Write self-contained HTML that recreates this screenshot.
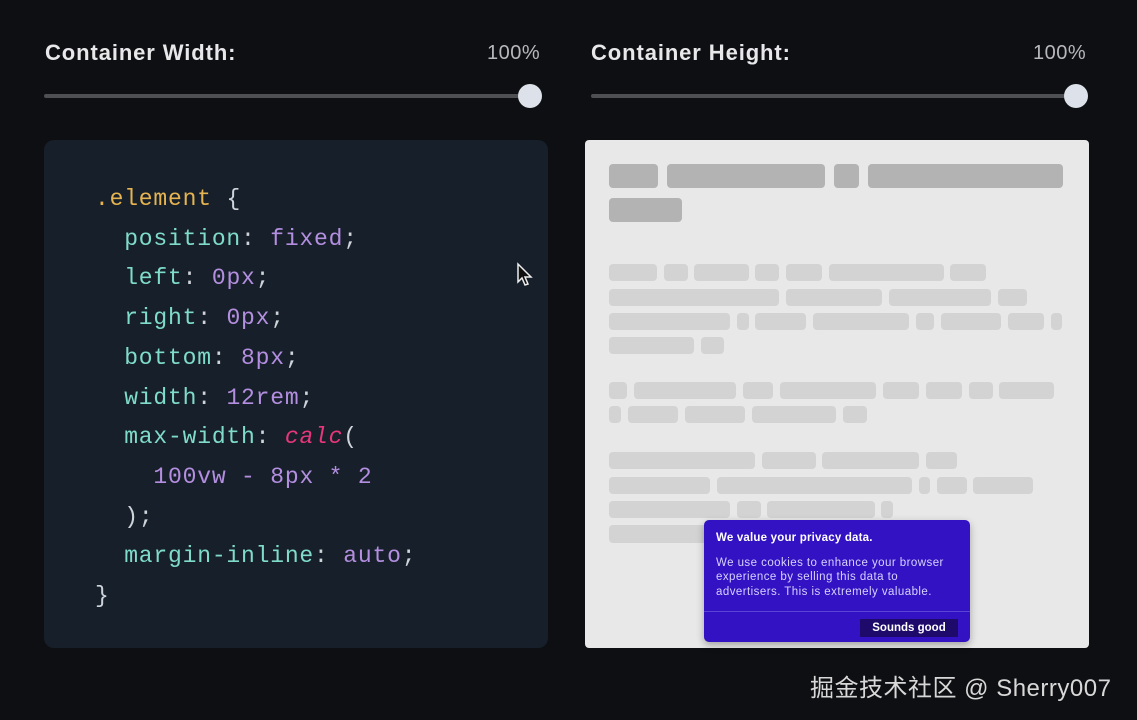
<!DOCTYPE html>
<html><head><meta charset="utf-8"><style>
*{margin:0;padding:0;box-sizing:border-box}
body{width:1137px;height:720px;background:#0e0f12;position:relative;overflow:hidden;font-family:"Liberation Sans",sans-serif}
.lbl{position:absolute;top:40px;color:#e8e8ea;font-size:22px;font-weight:bold;letter-spacing:0.9px}
.pct{position:absolute;top:42px;color:#b8b8bc;font-size:20px;letter-spacing:0.5px}
.track{position:absolute;top:94px;height:4px;background:#4d4f52;border-radius:2px}
.knob{position:absolute;top:84px;width:24px;height:24px;border-radius:50%;background:#dde1ea}
.code{position:absolute;left:44px;top:140px;width:504px;height:508px;background:#17202a;border-radius:10px}
.code pre{position:absolute;left:51px;top:40px;font-family:"Liberation Mono",monospace;font-size:23px;letter-spacing:0.8px;line-height:39.7px;color:#7fdbca}
.s{color:#e6b450}.v{color:#b48ee0}.c{color:#e8367a;font-style:italic}.p{color:#cfd3da}
.panel{position:absolute;left:585px;top:140px;width:504px;height:508px;background:#e8e8e8;border-radius:4px}
.b{position:absolute;border-radius:4px;background:#d3d3d3}
.d{background:#b3b3b3}
.ck{position:absolute;left:704px;top:520px;width:266px;height:122px;background:#3212c2;border-radius:5px;box-shadow:0 3px 8px rgba(0,0,0,.3);color:#fff;font-family:"Liberation Sans",sans-serif}
.ck h4{position:absolute;left:12px;top:12px;font-size:11.5px;letter-spacing:0.2px}
.ck p{position:absolute;left:12px;top:36px;font-size:11.5px;letter-spacing:0.45px;line-height:14.3px;color:#d8d2ff;width:236px}
.ck .ln{position:absolute;left:0;right:0;top:91px;height:1px;background:#5a44d8}
.ck .bt{position:absolute;left:156px;top:99px;width:98px;height:18px;background:#1d0a6a;font-size:11.5px;font-weight:bold;text-align:center;line-height:18px}
.wm{position:absolute;left:810px;top:668px;color:#d8d8d8;font-size:24px;letter-spacing:0.5px;font-family:"Liberation Sans","Noto Sans CJK SC",sans-serif}
</style></head><body>
<div class="lbl" style="left:45px">Container Width:</div>
<div class="pct" style="left:487px">100%</div>
<div class="track" style="left:44px;width:486px"></div>
<div class="knob" style="left:518px"></div>
<div class="lbl" style="left:591px">Container Height:</div>
<div class="pct" style="left:1033px">100%</div>
<div class="track" style="left:591px;width:485px"></div>
<div class="knob" style="left:1064px"></div>

<div class="code"><pre><span class="s">.element</span> <span class="p">{</span>
  position<span class="p">:</span> <span class="v">fixed</span><span class="p">;</span>
  left<span class="p">:</span> <span class="v">0px</span><span class="p">;</span>
  right<span class="p">:</span> <span class="v">0px</span><span class="p">;</span>
  bottom<span class="p">:</span> <span class="v">8px</span><span class="p">;</span>
  width<span class="p">:</span> <span class="v">12rem</span><span class="p">;</span>
  max-width<span class="p">:</span> <span class="c">calc</span><span class="p">(</span>
    <span class="v">100vw - 8px * 2</span>
  <span class="p">);</span>
  margin-inline<span class="p">:</span> <span class="v">auto</span><span class="p">;</span>
<span class="p">}</span></pre></div>
<svg style="position:absolute;left:516px;top:262px" width="18" height="26" viewBox="0 0 18 26"><path d="M2 2 L2 20 L6 16 L9 23 L12 22 L9 15 L15 15 Z" fill="#111" stroke="#eee" stroke-width="1.5"/></svg>

<div class="panel"></div>
<div class="b d" style="left:609px;top:164px;width:49px;height:24px"></div>
<div class="b d" style="left:667px;top:164px;width:158px;height:24px"></div>
<div class="b d" style="left:834px;top:164px;width:25px;height:24px"></div>
<div class="b d" style="left:868px;top:164px;width:195px;height:24px"></div>
<div class="b d" style="left:609px;top:198px;width:73px;height:24px"></div>

<div class="b" style="left:609px;top:264px;width:48px;height:17px"></div>
<div class="b" style="left:664px;top:264px;width:24px;height:17px"></div>
<div class="b" style="left:694px;top:264px;width:55px;height:17px"></div>
<div class="b" style="left:755px;top:264px;width:24px;height:17px"></div>
<div class="b" style="left:786px;top:264px;width:36px;height:17px"></div>
<div class="b" style="left:829px;top:264px;width:115px;height:17px"></div>
<div class="b" style="left:950px;top:264px;width:36px;height:17px"></div>

<div class="b" style="left:609px;top:289px;width:170px;height:17px"></div>
<div class="b" style="left:786px;top:289px;width:96px;height:17px"></div>
<div class="b" style="left:889px;top:289px;width:102px;height:17px"></div>
<div class="b" style="left:998px;top:289px;width:29px;height:17px"></div>

<div class="b" style="left:609px;top:313px;width:121px;height:17px"></div>
<div class="b" style="left:737px;top:313px;width:12px;height:17px"></div>
<div class="b" style="left:755px;top:313px;width:51px;height:17px"></div>
<div class="b" style="left:813px;top:313px;width:96px;height:17px"></div>
<div class="b" style="left:916px;top:313px;width:18px;height:17px"></div>
<div class="b" style="left:941px;top:313px;width:60px;height:17px"></div>
<div class="b" style="left:1008px;top:313px;width:36px;height:17px"></div>
<div class="b" style="left:1051px;top:313px;width:11px;height:17px"></div>

<div class="b" style="left:609px;top:337px;width:85px;height:17px"></div>
<div class="b" style="left:701px;top:337px;width:23px;height:17px"></div>

<div class="b" style="left:609px;top:382px;width:18px;height:17px"></div>
<div class="b" style="left:634px;top:382px;width:102px;height:17px"></div>
<div class="b" style="left:743px;top:382px;width:30px;height:17px"></div>
<div class="b" style="left:780px;top:382px;width:96px;height:17px"></div>
<div class="b" style="left:883px;top:382px;width:36px;height:17px"></div>
<div class="b" style="left:926px;top:382px;width:36px;height:17px"></div>
<div class="b" style="left:969px;top:382px;width:24px;height:17px"></div>
<div class="b" style="left:999px;top:382px;width:55px;height:17px"></div>

<div class="b" style="left:609px;top:406px;width:12px;height:17px"></div>
<div class="b" style="left:628px;top:406px;width:50px;height:17px"></div>
<div class="b" style="left:685px;top:406px;width:60px;height:17px"></div>
<div class="b" style="left:752px;top:406px;width:84px;height:17px"></div>
<div class="b" style="left:843px;top:406px;width:24px;height:17px"></div>

<div class="b" style="left:609px;top:452px;width:146px;height:17px"></div>
<div class="b" style="left:762px;top:452px;width:54px;height:17px"></div>
<div class="b" style="left:822px;top:452px;width:97px;height:17px"></div>
<div class="b" style="left:926px;top:452px;width:31px;height:17px"></div>

<div class="b" style="left:609px;top:477px;width:101px;height:17px"></div>
<div class="b" style="left:717px;top:477px;width:195px;height:17px"></div>
<div class="b" style="left:919px;top:477px;width:11px;height:17px"></div>
<div class="b" style="left:937px;top:477px;width:30px;height:17px"></div>
<div class="b" style="left:973px;top:477px;width:60px;height:17px"></div>

<div class="b" style="left:609px;top:501px;width:121px;height:17px"></div>
<div class="b" style="left:737px;top:501px;width:24px;height:17px"></div>
<div class="b" style="left:767px;top:501px;width:108px;height:17px"></div>
<div class="b" style="left:881px;top:501px;width:12px;height:17px"></div>

<div class="b" style="left:609px;top:525px;width:110px;height:18px"></div>

<div class="ck">
<h4>We value your privacy data.</h4>
<p>We use cookies to enhance your browser<br>experience by selling this data to<br>advertisers. This is extremely valuable.</p>
<div class="ln"></div>
<div class="bt">Sounds good</div>
</div>

<div class="wm">掘金技术社区 @ Sherry007</div>
</body></html>
